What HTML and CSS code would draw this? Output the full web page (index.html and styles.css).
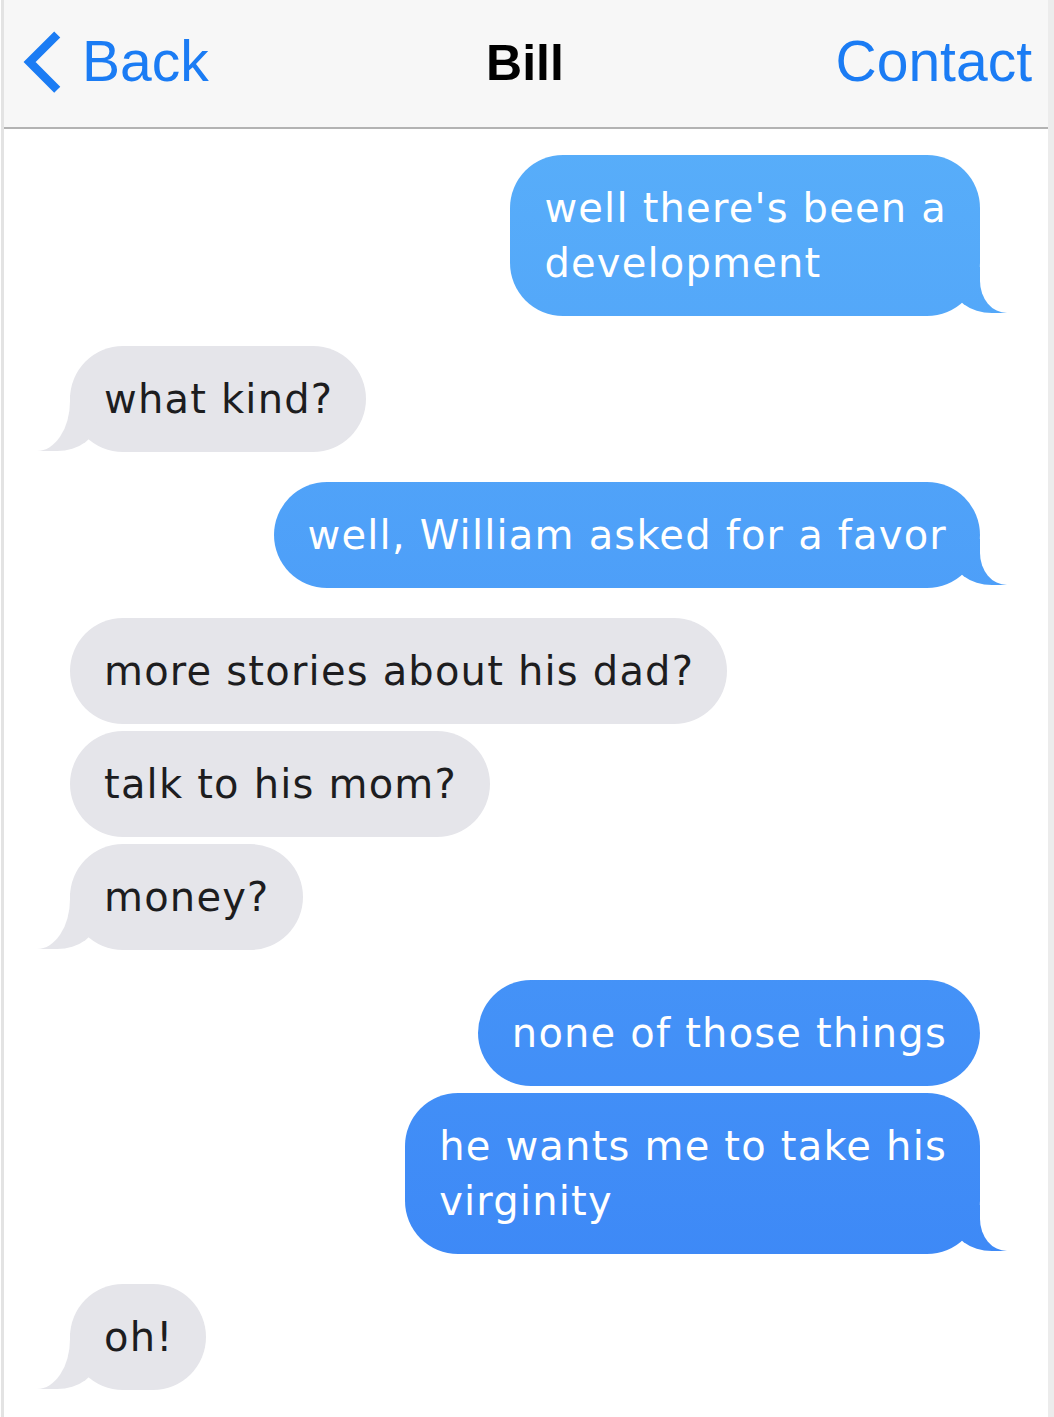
FILE: index.html
```html
<!DOCTYPE html>
<html lang="en">
<head>
  <meta charset="UTF-8">
  <meta name="viewport" content="width=device-width, initial-scale=1.0">
  <title>Bill</title>
  <link rel="stylesheet" href="styles.css">
</head>
<body>
  <div class="phone">
    <header class="nav">
      <a class="nav-back" href="#">
        <svg class="chevron" width="40" height="70" viewBox="20 28 42 70">
          <path d="M57 33 L28 62 L57 91" fill="none" stroke="#1b7cf4" stroke-width="9"/>
        </svg>
        <span>Back</span>
      </a>
      <div class="nav-title">Bill</div>
      <a class="nav-contact" href="#">Contact</a>
    </header>

    <div class="messages">
      <p class="bubble sent tail">well there's been a<br>development</p>
      <p class="bubble received tail">what kind?</p>
      <p class="bubble sent tail">well, William asked for a favor</p>
      <p class="bubble received">more stories about his dad?</p>
      <p class="bubble received">talk to his mom?</p>
      <p class="bubble received tail">money?</p>
      <p class="bubble sent">none of those things</p>
      <p class="bubble sent tail">he wants me to take his<br>virginity</p>
      <p class="bubble received tail">oh!</p>
    </div>
  </div>
</body>
</html>
```

FILE: styles.css
```css
html, body {
  margin: 0;
  background-color: #fff;
}
body {
  padding-left: 1px;
}
.phone {
  width: 1053px;
  box-sizing: border-box;
  border-left: 3px solid #e3e3e3;
  border-right: 6px solid #ececec;
  min-height: 1417px;
}
.nav {
  display: grid;
  grid-template-columns: 1fr auto 1fr;
  align-items: center;
  height: 127px;
  padding: 0 16px 0 14px;
  background-color: #f7f7f7;
  border-bottom: 2px solid #b3b3b3;
  font-family: "Liberation Sans", Arial, sans-serif;
}
.nav a {
  color: #1b7cf4;
  text-decoration: none;
  font-size: 57px;
}
.nav-back {
  display: flex;
  align-items: center;
  gap: 20px;
  justify-self: start;
  margin-top: -6px;
}
.chevron {
  display: block;
  margin: 4px 0 0 4px;
}
.nav-title {
  font-size: 50px;
  font-weight: bold;
  color: #000;
  margin-top: -2px;
}
.nav-contact {
  justify-self: end;
  margin-top: -6px;
}

.messages {
  display: flex;
  flex-direction: column;
  padding: 26px 0 30px;
}
.bubble {
  position: relative;
  z-index: 0;
  margin: 0;
  padding: 26px 33px 25px 34px;
  border-radius: 53px;
  font-family: "DejaVu Sans", Tahoma, sans-serif;
  font-size: 40px;
  letter-spacing: 1.2px;
  line-height: 55px;
  white-space: nowrap;
  box-sizing: border-box;
}
.sent {
  align-self: flex-end;
  margin-right: 68px;
  color: #fff;
  background: linear-gradient(to bottom, #5bb2fa 0%, #3a84f6 100%) fixed;
}
.received {
  align-self: flex-start;
  margin-left: 66px;
  color: #1d1d1f;
  background-color: #e5e5ea;
}
.sent + .sent,
.received + .received {
  margin-top: 7px;
}
.sent + .received,
.received + .sent {
  margin-top: 30px;
}

/* tails */
.tail::before,
.tail::after {
  content: "";
  position: absolute;
  z-index: -1;
}
.sent.tail::before {
  bottom: 3px;
  right: -27px;
  width: 55px;
  height: 46px;
  background: linear-gradient(to bottom, #5bb2fa 0%, #3a84f6 100%) fixed;
  border-bottom-left-radius: 40px 30px;
}
.sent.tail::after {
  bottom: 3px;
  right: -60px;
  width: 60px;
  height: 60px;
  background-color: #fff;
  border-bottom-left-radius: 27px 32px;
}
.received.tail::before {
  bottom: 1px;
  left: -33px;
  width: 60px;
  height: 56px;
  background-color: #e5e5ea;
  border-bottom-right-radius: 40px 30px;
}
.received.tail::after {
  bottom: 1px;
  left: -60px;
  width: 60px;
  height: 70px;
  background-color: #fff;
  border-bottom-right-radius: 33px 50px;
}
```
